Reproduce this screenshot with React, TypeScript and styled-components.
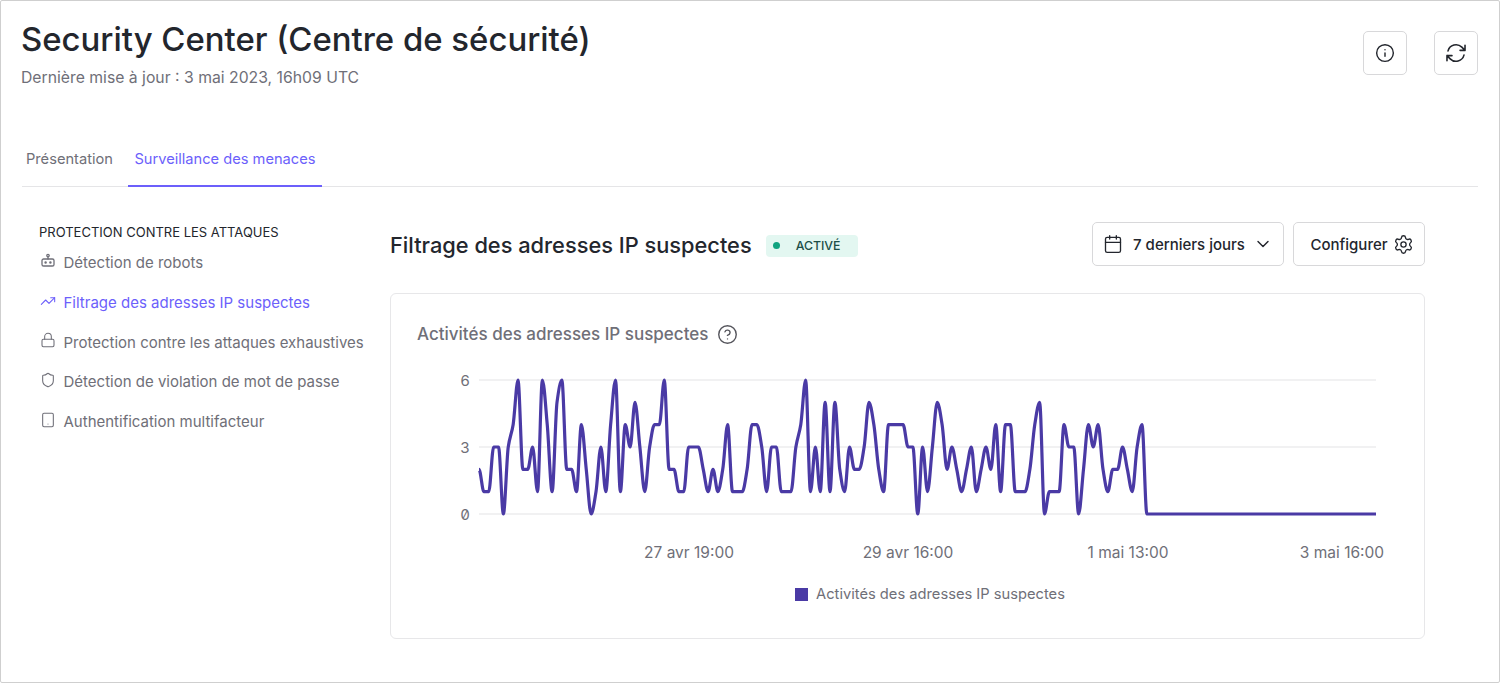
import React from "react";
import styled, { createGlobalStyle } from "styled-components";
import { Info, Calendar, ChevronDown, Settings, CircleHelp, TrendingUp, Lock, Shield, Tablet } from "lucide-react";

const Global = createGlobalStyle`
  html, body { margin: 0; padding: 0; background: #fff; }
  body { font-family: Inter, "Liberation Sans", sans-serif; color: #23262d; }
  * { box-sizing: border-box; }
`;

const Page = styled.div`
  width: 1500px; height: 683px; border: 1px solid #cfcfcf; border-radius: 2px;
  padding: 0 21px; overflow: hidden; background: #fff;
`;
const Header = styled.header`
  display: flex; justify-content: space-between; align-items: flex-start; height: 123px; padding-top: 17px;
`;
const Title = styled.h1`
  margin: 0 0 0 -1px; font-size: 32.9px; line-height: 42px; font-weight: 500; color: #23262d;
`;
const Subtitle = styled.p`
  margin: 8px 0 0 -1px; font-size: 15.75px; line-height: 20px; color: #6f6f78;
`;
const HeaderActions = styled.div`
  display: flex; gap: 27px; padding-top: 13px;
`;
const IconButton = styled.button`
  width: 44px; height: 44px; display: flex; align-items: center; justify-content: center; padding: 0;
  background: #fff; border: 1px solid #d8d8da; border-radius: 5px; color: #23262d;
`;
const Tabs = styled.nav`
  display: flex; height: 63px; border-bottom: 1px solid #e5e5e7;
`;
const Tab = styled.div<{ $active?: boolean }>`
  padding: 8px ${p => (p.$active ? "6.5px" : "4px")} 0; margin-right: ${p => (p.$active ? "0" : "11px")};
  height: 63px; display: flex; align-items: center;
  font-size: 14.65px; color: ${p => (p.$active ? "#6c5ffb" : "#6f6f78")};
  border-bottom: 2px solid ${p => (p.$active ? "#6c5ffb" : "transparent")};
`;
const Body = styled.div`
  display: flex; padding-top: 35px;
`;
const Sidebar = styled.aside`
  width: 368px; flex: none; padding: 1px 0 0 17px;
`;
const SideHeading = styled.div`
  font-size: 13px; line-height: 18px; color: #23262d;
`;
const SideList = styled.ul`
  list-style: none; margin: 2px 0 0; padding: 0;
`;
const SideItem = styled.li<{ $active?: boolean }>`
  display: flex; align-items: center; height: 39.7px; padding-left: 1px; gap: 7.5px; white-space: nowrap;
  font-size: 15px; color: ${p => (p.$active ? "#6c5ffb" : "#6f6f78")};
  svg { flex: none; margin-top: -4px; }
`;
const Main = styled.main`
  width: 1035px; flex: none;
`;
const MainHead = styled.div`
  display: flex; align-items: center; height: 44px; margin-bottom: 27px;
`;
const MainTitle = styled.h2`
  margin: 2px 0 0; font-size: 21.8px; font-weight: 500; color: #23262d; white-space: nowrap;
`;
const Badge = styled.span`
  display: flex; align-items: center; width: 92px; height: 22px; margin: 3px 0 0 14px; padding-left: 7px;
  background: #e3f7f1; border-radius: 4px; font-size: 12.3px; font-weight: 500; color: #1d4f48;
`;
const Dot = styled.span`
  width: 7px; height: 7px; border-radius: 50%; background: #10a37f; margin-right: 16px;
`;
const Controls = styled.div`
  margin-left: auto; display: flex; gap: 9px;
`;
const Control = styled.button<{ $w: number }>`
  width: ${p => p.$w}px; height: 44px; display: flex; align-items: center; justify-content: center; padding: 0;
  background: #fff; border: 1px solid #d8d8da; border-radius: 5px;
  font-family: inherit; font-size: 15px; font-weight: 500; color: #23262d;
`;
const ControlLabel = styled.span<{ $ml: number; $mr: number }>`
  margin: 0 ${p => p.$mr}px 0 ${p => p.$ml}px; white-space: nowrap;
`;
const Card = styled.section`
  width: 1035px; height: 346px; border: 1px solid #e7e7e9; border-radius: 6px; padding: 29px 26px 0;
`;
const CardTitle = styled.div`
  display: flex; align-items: center; gap: 9px; height: 22px;
  font-size: 17px; font-weight: 500; color: #6f6f78;
  svg { color: #55555c; }
`;
const ChartSvg = styled.svg`
  display: block; margin: 12px 0 0 -26px;
`;
const AxisY = styled.text`
  font-family: Inter, sans-serif; font-size: 15px; fill: #6f6f78; font-feature-settings: "zero", "tnum";
`;
const AxisX = styled.text`
  font-family: Inter, sans-serif; font-size: 15.5px; fill: #6f6f78;
`;
const Legend = styled.div`
  display: flex; align-items: center; justify-content: center; gap: 8px; padding-left: 45px;
  font-size: 14.7px; color: #6f6f78;
`;
const Swatch = styled.span`
  width: 13px; height: 13px; background: #4a3aa5;
`;

const BotIcon = () => (
  <svg width="16" height="16" viewBox="0 0 16 16" fill="none" stroke="#6f6f78" strokeWidth="1.3" strokeLinecap="round" strokeLinejoin="round">
    <circle cx="8" cy="2.6" r="1.2" />
    <path d="M8 3.8V6" />
    <rect x="2" y="6" width="12" height="7" rx="1.6" />
    <circle cx="5.6" cy="9.5" r=".6" fill="#6f6f78" />
    <circle cx="10.4" cy="9.5" r=".6" fill="#6f6f78" />
  </svg>
);

const ArrowPathIcon = () => (
  <svg width="24" height="24" viewBox="0 0 24 24" fill="none" stroke="currentColor" strokeWidth="1.6" strokeLinecap="round" strokeLinejoin="round">
    <path d="M16.023 9.348h4.992v-.001M2.985 19.644v-4.992m0 0h4.992m-4.993 0 3.181 3.183a8.25 8.25 0 0 0 13.803-3.7M4.031 9.865a8.25 8.25 0 0 1 13.803-3.7l3.181 3.182m0-4.991v4.99" />
  </svg>
);

const values = [
  2,1,1,3,3,0,3,4,6,2,2,3,1,6,4,1,5,6,2,2,1,4,2,0,1,3,1,4,6,1,4,3,5,3,1,3,4,4,6,2,2,1,1,3,3,3,2,1,2,1,2,4,1,1,1,2,4,4,3,1,3,3,1,1,1,3,4,
  6,1,3,1,5,1,5,2,1,3,2,2,3,5,4,2,1,4,4,4,4,3,3,0,3,1,3,5,4,2,3,2,1,2,3,1,2,3,2,4,1,4,4,1,1,1,2,4,5,0,1,1,1,4,3,3,0,2,4,3,4,2,1,2,2,3,2,1,3,4,
];

const X0 = 88, STEP = 4.875, Y0 = 157, UNIT = 22.33;
const count = Math.round((1376 - 479) / STEP) + 1;
const data = Array.from({ length: count }, (_, i) => (i < values.length ? values[i] : 0));
const px = (i: number) => X0 + i * STEP;
const py = (v: number) => Y0 - v * UNIT;

function monotonePath(d: number[]) {
  const n = d.length;
  const slope: number[] = [];
  for (let i = 0; i < n; i++) {
    if (i === 0 || i === n - 1) { slope.push(0); continue; }
    const a = d[i] - d[i - 1], b = d[i + 1] - d[i];
    slope.push(a * b <= 0 ? 0 : (2 * a * b) / (a + b));
  }
  let s = `M${px(0)} ${py(d[0])}`;
  for (let i = 0; i < n - 1; i++) {
    const c = STEP / 3;
    s += `C${(px(i) + c).toFixed(2)} ${(py(d[i]) - slope[i] * UNIT / 3).toFixed(2)} ${(px(i + 1) - c).toFixed(2)} ${(py(d[i + 1]) + slope[i + 1] * UNIT / 3).toFixed(2)} ${px(i + 1).toFixed(2)} ${py(d[i + 1]).toFixed(2)}`;
  }
  return s;
}

const nav = [
  { label: "Détection de robots", icon: <BotIcon /> },
  { label: "Filtrage des adresses IP suspectes", icon: <TrendingUp size={16} strokeWidth={1.6} />, active: true },
  { label: "Protection contre les attaques exhaustives", icon: <Lock size={16} strokeWidth={1.6} /> },
  { label: "Détection de violation de mot de passe", icon: <Shield size={16} strokeWidth={1.6} /> },
  { label: "Authentification multifacteur", icon: <Tablet size={16} strokeWidth={1.6} /> },
];

const xTicks: [string, number][] = [["27 avr 19:00", 298], ["29 avr 16:00", 517], ["1 mai 13:00", 737], ["3 mai 16:00", 951]];

export default function App() {
  return (
    <Page>
      <Global />
      <Header>
        <div>
          <Title>Security Center (Centre de sécurité)</Title>
          <Subtitle>Dernière mise à jour : 3 mai 2023, 16h09 UTC</Subtitle>
        </div>
        <HeaderActions>
          <IconButton><Info size={20} strokeWidth={1.7} /></IconButton>
          <IconButton><ArrowPathIcon /></IconButton>
        </HeaderActions>
      </Header>
      <Tabs>
        <Tab>Présentation</Tab>
        <Tab $active>Surveillance des menaces</Tab>
      </Tabs>
      <Body>
        <Sidebar>
          <SideHeading>PROTECTION CONTRE LES ATTAQUES</SideHeading>
          <SideList>
            {nav.map(n => (
              <SideItem key={n.label} $active={n.active}>{n.icon}{n.label}</SideItem>
            ))}
          </SideList>
        </Sidebar>
        <Main>
          <MainHead>
            <MainTitle>Filtrage des adresses IP suspectes</MainTitle>
            <Badge><Dot />ACTIVÉ</Badge>
            <Controls>
              <Control $w={192}>
                <Calendar size={20} strokeWidth={1.6} />
                <ControlLabel $ml={10} $mr={8}>7 derniers jours</ControlLabel>
                <ChevronDown size={20} strokeWidth={1.7} />
              </Control>
              <Control $w={132}>
                <ControlLabel $ml={6} $mr={5}>Configurer</ControlLabel>
                <Settings size={21} strokeWidth={1.5} />
              </Control>
            </Controls>
          </MainHead>
          <Card>
            <CardTitle>Activités des adresses IP suspectes <CircleHelp size={21} strokeWidth={1.6} /></CardTitle>
            <ChartSvg width="1033" height="228" viewBox="0 0 1033 228">
              {[6, 3, 0].map(v => (
                <g key={v}>
                  <line x1={X0} x2={985} y1={py(v)} y2={py(v)} stroke="#ececee" strokeWidth="1.5" />
                  <AxisY x={X0 - 9} y={py(v) + 5.5} textAnchor="end">{v}</AxisY>
                </g>
              ))}
              <path d={monotonePath(data)} fill="none" stroke="#4a3aa5" strokeWidth="3.2" strokeLinejoin="round" />
              {xTicks.map(([t, x]) => (
                <AxisX key={t} x={x} y={201} textAnchor="middle">{t}</AxisX>
              ))}
            </ChartSvg>
            <Legend><Swatch />Activités des adresses IP suspectes</Legend>
          </Card>
        </Main>
      </Body>
    </Page>
  );
}
